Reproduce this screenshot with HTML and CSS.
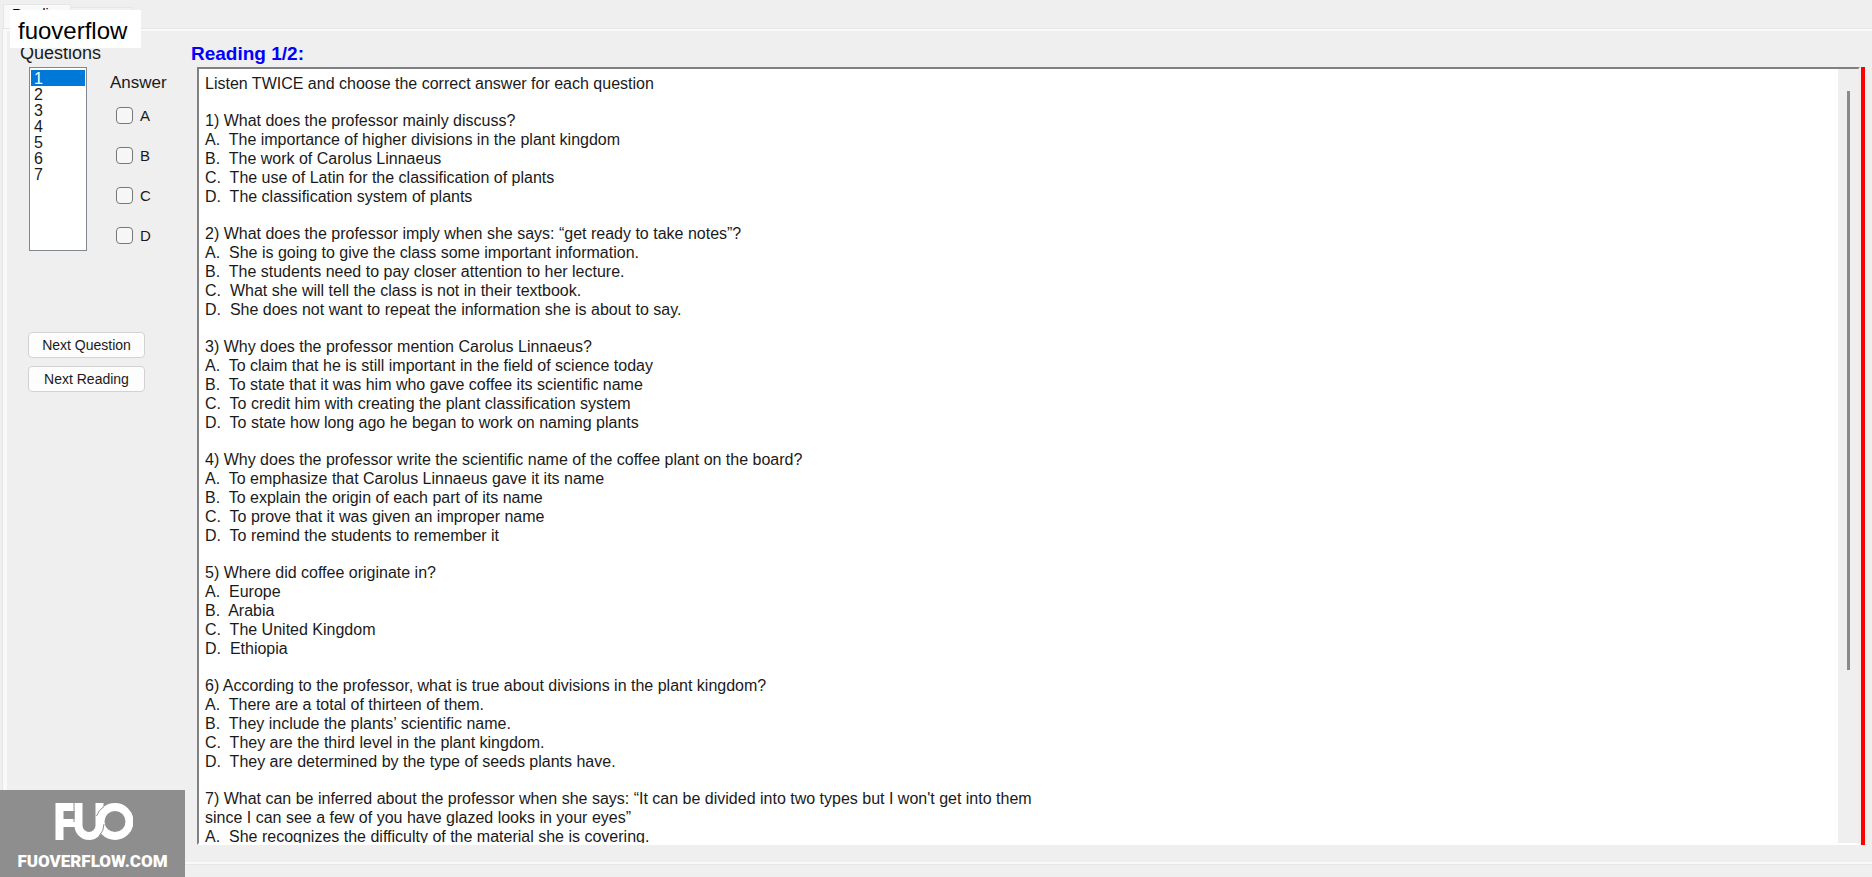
FILE: index.html
```html
<!DOCTYPE html>
<html lang="en">
<head>
<meta charset="utf-8">
<title>Reading</title>
<link rel="stylesheet" href="styles.css">
</head>
<body>
<nav class="tabs">
  <button class="tab tab-active" type="button">Reading</button>
  <button class="tab" type="button" aria-label="Second tab"></button>
</nav>
<main class="panel">
  <form class="sidebar">
    <label class="questions-label" for="questions">Questions</label>
    <div class="pickers">
      <select class="question-list" id="questions" size="7">
        <option selected>1</option><option>2</option><option>3</option><option>4</option><option>5</option><option>6</option><option>7</option>
      </select>
      <fieldset class="answers">
        <legend class="answers-title">Answer</legend>
        <label class="answer"><input type="checkbox">A</label>
        <label class="answer"><input type="checkbox">B</label>
        <label class="answer"><input type="checkbox">C</label>
        <label class="answer"><input type="checkbox">D</label>
      </fieldset>
    </div>
    <div class="actions">
      <button class="action" type="button">Next Question</button>
      <button class="action" type="button">Next Reading</button>
    </div>
  </form>
  <section class="reading">
    <h1 class="reading-title">Reading 1/2:</h1>
    <div class="reading-row">
      <div class="textbox">
        <div class="passage">
          <p>Listen TWICE and choose the correct answer for each question</p>
          <p>1) What does the professor mainly discuss?
A.  The importance of higher divisions in the plant kingdom
B.  The work of Carolus Linnaeus
C.  The use of Latin for the classification of plants
D.  The classification system of plants</p>
          <p>2) What does the professor imply when she says: “get ready to take notes”?
A.  She is going to give the class some important information.
B.  The students need to pay closer attention to her lecture.
C.  What she will tell the class is not in their textbook.
D.  She does not want to repeat the information she is about to say.</p>
          <p>3) Why does the professor mention Carolus Linnaeus?
A.  To claim that he is still important in the field of science today
B.  To state that it was him who gave coffee its scientific name
C.  To credit him with creating the plant classification system
D.  To state how long ago he began to work on naming plants</p>
          <p>4) Why does the professor write the scientific name of the coffee plant on the board?
A.  To emphasize that Carolus Linnaeus gave it its name
B.  To explain the origin of each part of its name
C.  To prove that it was given an improper name
D.  To remind the students to remember it</p>
          <p>5) Where did coffee originate in?
A.  Europe
B.  Arabia
C.  The United Kingdom
D.  Ethiopia</p>
          <p>6) According to the professor, what is true about divisions in the plant kingdom?
A.  There are a total of thirteen of them.
B.  They include the plants’ scientific name.
C.  They are the third level in the plant kingdom.
D.  They are determined by the type of seeds plants have.</p>
          <p>7) What can be inferred about the professor when she says: “It can be divided into two types but I won't get into them
since I can see a few of you have glazed looks in your eyes”
A.  She recognizes the difficulty of the material she is covering.</p>
        </div>
        <div class="scroll-track"><div class="scroll-thumb"></div></div>
      </div>
      <div class="marker"></div>
    </div>
  </section>
</main>
<div class="name-tag">fuoverflow</div>
<div class="watermark">
  <svg class="logo" viewBox="0 0 80 40" aria-hidden="true">
    <g fill="none" stroke="#fff" stroke-width="8">
      <path d="M6.500 38V5H22M6.500 21H22"/>
      <path d="M25.500 1V23.500A10.500 10.500 0 0 0 46.500 23.500V1"/>
      <circle cx="62" cy="19.500" r="14.500"/>
      <path d="M21 1V20" stroke="#8e8e8e" stroke-width="1"/>
      <path d="M43.500 14A19 19 0 0 1 51 4.500" stroke="#8e8e8e" stroke-width="1"/>
      <path d="M51 22Q51 29 46 34" stroke="#8e8e8e" stroke-width="1"/>
    </g>
  </svg>
  <span class="site">FUOVERFLOW.COM</span>
</div>
</body>
</html>
```
FILE: styles.css
```css
* { box-sizing: border-box; }
body {
  margin: 0;
  height: 100vh;
  display: flex;
  flex-direction: column;
  overflow: hidden;
  background: #efefef;
  color: #1a1a1a;
  font: 16px/19px "Liberation Sans", Arial, sans-serif;
}
.tabs {
  display: flex;
  align-items: flex-end;
  height: 29px;
  padding-left: 3px;
}
.tab {
  width: 62px;
  height: 22px;
  border: 1px solid #e6e6e6;
  border-width: 1px 1px 0 0;
  padding: 0;
  background: #f1f1f1;
}
.tab-active {
  display: flex;
  width: 68px;
  height: 25px;
  padding: 1px 0 0 8px;
  border-width: 1px;
  border-bottom: 0;
  background: #f9f9f9;
  font: 14px/16px "Liberation Sans", Arial, sans-serif;
}
.panel {
  flex: 1;
  min-height: 0;
  display: flex;
  margin: 0 0 13px 3px;
  border: 2px solid #f9f9f9;
  border-left-width: 4px;
  border-right: 0;
  outline: 1px solid #e6e6e6;
}
.sidebar {
  flex: none;
  width: 184px;
  padding: 13px 0 0 13px;
}
.questions-label {
  display: block;
  font-size: 18px;
}
.pickers {
  display: flex;
  gap: 23px;
  margin: 4px 0 0 9px;
}
.question-list {
  width: 58px;
  height: 184px;
  padding: 2px 1px;
  border: 1px solid #82878f;
  border-radius: 0;
  outline: 0;
  background: #fff;
  color: #1a1a1a;
  font: 16px/16px "Liberation Sans", Arial, sans-serif;
  overflow: hidden;
}
.question-list option {
  height: 16px;
  min-height: 16px;
  padding: 0 3px;
}
.question-list option:checked {
  background: #0078d7 linear-gradient(#0078d7, #0078d7);
  color: #fff;
}
.answers {
  display: flex;
  flex-direction: column;
  gap: 20px;
  margin: 0;
  border: 0;
  padding: 0;
}
.answers-title {
  padding: 6px 0 13px;
  font-size: 17px;
  line-height: 19px;
}
.answer {
  display: flex;
  align-items: center;
  gap: 7px;
  height: 20px;
  padding-left: 6px;
  font-size: 15px;
}
.answer input {
  appearance: none;
  width: 17px;
  height: 17px;
  margin: 0;
  border: 1px solid #777;
  border-radius: 4px;
  background: #f6f6f6;
}
.answer input:checked { background: #0078d7; }
.actions {
  display: flex;
  flex-direction: column;
  gap: 8px;
  width: 117px;
  margin: 81px 0 0 8px;
}
.action {
  height: 26px;
  border: 1px solid #d2d2d2;
  border-radius: 4px;
  padding: 0;
  background: #fdfdfd;
  color: #1a1a1a;
  font: 14px/16px "Liberation Sans", Arial, sans-serif;
}
.reading {
  flex: 1;
  min-width: 0;
  display: flex;
  flex-direction: column;
  padding: 13px 7px 17px 0;
}
.reading-title {
  margin: 0 0 4px;
  color: #00f;
  font-size: 19px;
  line-height: 19px;
}
.reading-row {
  flex: 1;
  min-height: 0;
  display: flex;
  gap: 1px;
  padding-left: 6px;
}
.textbox {
  flex: 1;
  min-width: 0;
  display: flex;
  border: 2px solid #808080;
  border-right-color: #f3e9e9;
  border-bottom-color: #fff;
}
.passage {
  flex: 1;
  display: flex;
  flex-direction: column;
  gap: 18px;
  padding: 5px 6px 0;
  background: #fff;
  overflow: hidden;
}
.passage p {
  flex: none;
  margin: 0;
  white-space: pre-wrap;
}
.scroll-track {
  width: 20px;
  padding: 22px 8px 0 9px;
  background: #efefef;
}
.scroll-thumb {
  height: 77%;
  background: #8a8a8a;
}
.marker {
  width: 4px;
  background: #f00;
}
.name-tag {
  position: absolute;
  left: 10px;
  top: 10px;
  padding: 7px 14px 3px 8px;
  background: #fff;
  color: #000;
  font-size: 24px;
  line-height: 28px;
}
.watermark {
  position: absolute;
  left: 0;
  bottom: 0;
  display: flex;
  flex-direction: column;
  align-items: center;
  gap: 9px;
  width: 185px;
  height: 87px;
  padding-top: 12px;
  background: #8e8e8e;
  color: #fff;
}
.logo {
  width: 80px;
  height: 40px;
}
.site {
  font: 900 17px/20px Roboto, sans-serif;
}
```
